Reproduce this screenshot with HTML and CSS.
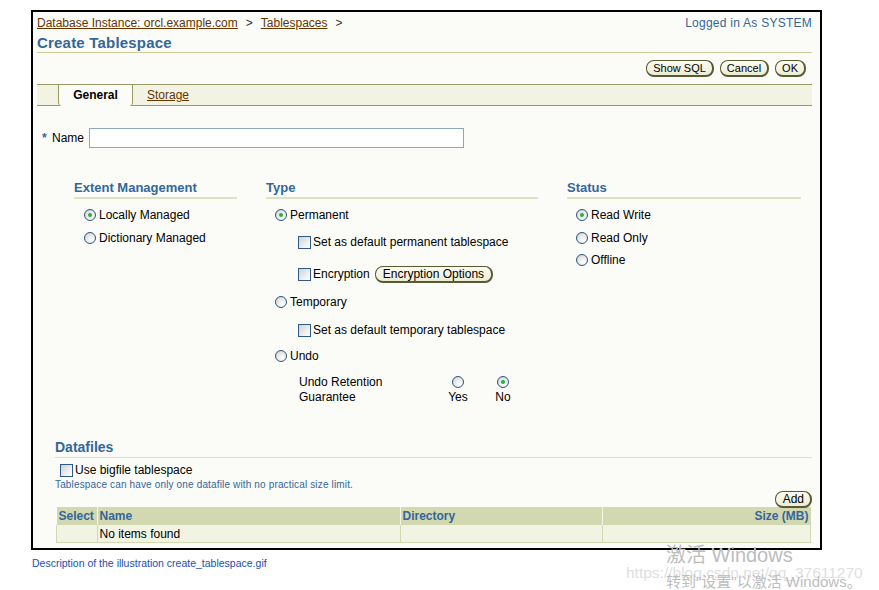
FILE: index.html
```html
<!DOCTYPE html>
<html>
<head>
<meta charset="utf-8">
<link rel="stylesheet" href="styles.css">
</head>
<body>
<div class="frame">
  <div class="topbar">
    <div class="crumbs"><a class="link">Database Instance: orcl.example.com</a><span class="sep">&gt;</span><a class="link">Tablespaces</a><span class="sep">&gt;</span></div>
    <div class="login">Logged in As SYSTEM</div>
  </div>
  <h1 class="title">Create Tablespace</h1>
  <div class="actions">
    <span class="btn">Show SQL</span>
    <span class="btn">Cancel</span>
    <span class="btn">OK</span>
  </div>
  <div class="tabbar">
    <div class="tab active">General</div>
    <div class="tab"><a class="link">Storage</a></div>
  </div>

  <div class="namerow">
    <span class="req">*</span><span class="namelbl">Name</span><span class="input"></span>
  </div>

  <div class="sections">
    <div class="col col-ext">
      <h2 class="sechead">Extent Management</h2>
      <div class="opts">
        <div class="opt"><span class="radio on"></span>Locally Managed</div>
        <div class="opt"><span class="radio"></span>Dictionary Managed</div>
      </div>
    </div>
    <div class="col col-type">
      <h2 class="sechead">Type</h2>
      <div class="opts">
        <div class="opt"><span class="radio on"></span>Permanent</div>
        <div class="opt sub sp1"><span class="check"></span>Set as default permanent tablespace</div>
        <div class="opt sub sp2"><span class="check"></span>Encryption<span class="btn encbtn">Encryption Options</span></div>
        <div class="opt sp3"><span class="radio"></span>Temporary</div>
        <div class="opt sub sp4"><span class="check"></span>Set as default temporary tablespace</div>
        <div class="opt sp5"><span class="radio"></span>Undo</div>
        <div class="undoret">
          <div class="urlabel">Undo Retention<br>Guarantee</div>
          <div class="urchoice yes"><span class="radio"></span><span class="urtext">Yes</span></div>
          <div class="urchoice no"><span class="radio on"></span><span class="urtext">No</span></div>
        </div>
      </div>
    </div>
    <div class="col col-status">
      <h2 class="sechead">Status</h2>
      <div class="opts">
        <div class="opt"><span class="radio on"></span>Read Write</div>
        <div class="opt"><span class="radio"></span>Read Only</div>
        <div class="opt st3"><span class="radio"></span>Offline</div>
      </div>
    </div>
  </div>

  <div class="datafiles">
    <h2 class="sechead dfhead">Datafiles</h2>
    <div class="opt bigfile"><span class="check"></span>Use bigfile tablespace</div>
    <div class="hint">Tablespace can have only one datafile with no practical size limit.</div>
    <div class="addrow"><span class="btn">Add</span></div>
    <table class="grid">
      <thead>
        <tr><th class="c-sel">Select</th><th class="c-name">Name</th><th class="c-dir">Directory</th><th class="c-size">Size (MB)</th></tr>
      </thead>
      <tbody>
        <tr><td></td><td>No items found</td><td></td><td></td></tr>
      </tbody>
    </table>
  </div>
</div>
<div class="caption">Description of the illustration create_tablespace.gif</div>
<div class="watermark">
  <div class="wm1">激活 Windows</div>
  <div class="wm2">https://blog.csdn.net/qq_37611270</div>
  <div class="wm3">转到"设置"以激活 Windows。</div>
</div>
</body>
</html>
```
FILE: styles.css
```css
html, body {
  margin: 0;
  padding: 0;
  background: #ffffff;
  font-family: "Liberation Sans", Arial, sans-serif;
  font-size: 12px;
  color: #000;
}
body {
  position: relative;
  width: 879px;
  height: 590px;
  overflow: hidden;
}
.frame {
  box-sizing: border-box;
  margin: 10px 0 0 31px;
  width: 791px;
  height: 540px;
  border: 2px solid #000;
  background: #fbfcf8;
  padding: 3px 8px 0 4px;
}
.link {
  color: #663300;
  text-decoration: underline;
}
.topbar {
  display: flex;
  justify-content: space-between;
  align-items: baseline;
  height: 16px;
  line-height: 16px;
  font-size: 12px;
}
.sep {
  margin: 0 8px;
  color: #333;
}
.login {
  color: #336699;
  letter-spacing: 0.25px;
}
.title {
  margin: 3px 0 0 0;
  font-size: 15px;
  line-height: 17px;
  font-weight: bold;
  color: #336699;
  letter-spacing: 0.2px;
  padding-bottom: 1px;
  border-bottom: 1px solid #cccc99;
}
.actions {
  display: flex;
  justify-content: flex-end;
  gap: 6px;
  padding: 7px 6px 0 0;
  height: 17px;
}
.btn {
  display: inline-flex;
  align-items: center;
  box-sizing: border-box;
  height: 17px;
  padding: 0 6px;
  border: 1px solid #5a5a32;
  border-right-width: 2px;
  border-bottom-width: 2px;
  border-radius: 8px;
  background: linear-gradient(#fbfbf0, #ecedd6);
  font-size: 11px;
  line-height: 14px;
  color: #000;
  white-space: nowrap;
}
.tabbar {
  margin-top: 7px;
  height: 20px;
  background: #f2f3e3;
  border-top: 1px solid #999966;
  border-bottom: 1px solid #999966;
  display: flex;
  padding-left: 21px;
}
.tab {
  box-sizing: border-box;
  height: 21px;
  line-height: 20px;
  padding: 0 14px;
  font-size: 12px;
}
.tab.active {
  width: 75px;
  text-align: center;
  background: #fbfcf8;
  border-left: 1px solid #999966;
  border-right: 1px solid #999966;
  border-radius: 0 0 4px 4px;
  font-weight: bold;
  margin-bottom: -1px;
}
.namerow {
  display: flex;
  align-items: center;
  margin-top: 22px;
  height: 20px;
}
.req {
  color: #336699;
  font-weight: bold;
  width: 10px;
  padding-left: 5px;
  font-size: 12px;
}
.namelbl {
  width: 37px;
}
.input {
  box-sizing: border-box;
  width: 375px;
  height: 20px;
  border: 1px solid #8fa6bf;
  background: #fff;
}
.sections {
  display: grid;
  grid-template-columns: 163px 272px 234px;
  column-gap: 29px;
  padding-left: 37px;
  margin-top: 32px;
}
.sechead {
  margin: 0;
  font-size: 13px;
  line-height: 16px;
  font-weight: bold;
  color: #336699;
  border-bottom: 2px solid #dde2c4;
  padding-bottom: 1px;
}
.opts {
  padding-top: 8px;
}
.opt {
  display: flex;
  align-items: center;
  height: 16px;
  line-height: 16px;
  margin-bottom: 7px;
  padding-left: 10px;
  white-space: nowrap;
}
.col-type .opt, .col-status .opt {
  padding-left: 9px;
}
.col-type .opt.sub {
  padding-left: 32px;
}
.opt.sp1 { margin-top: 11px; }
.opt.sp2 { margin-top: 15px; margin-bottom: 0; height: 18px; }
.opt.sp3 { margin-top: 11px; }
.opt.sp4 { margin-top: 12px; }
.opt.sp5 { margin-top: 10px; }
.opt.st3 { margin-top: -1px; }
.radio {
  box-sizing: border-box;
  position: relative;
  display: inline-block;
  width: 12px;
  height: 12px;
  border: 1px solid #2f5578;
  border-radius: 50%;
  background: radial-gradient(circle at 65% 70%, #ffffff 0%, #e4e4e4 60%, #c4c4c4 100%);
  margin-right: 3px;
  flex: none;
}
.radio.on::after {
  content: "";
  position: absolute;
  left: 3px;
  top: 3px;
  width: 4px;
  height: 4px;
  border-radius: 50%;
  background: #22b43a;
}
.check {
  box-sizing: border-box;
  display: inline-block;
  width: 13px;
  height: 13px;
  border: 1px solid #2d5a87;
  background: linear-gradient(135deg, #cfcfcf, #f4f4f4 70%, #ffffff);
  margin-right: 2px;
  flex: none;
}
.encbtn {
  margin-left: 5px;
  padding: 0 7px;
  font-size: 12px;
}
.undoret {
  display: flex;
  align-items: flex-start;
  padding-left: 33px;
  margin-top: 11px;
  line-height: 15px;
  font-size: 12px;
}
.urlabel {
  width: 147px;
}
.urchoice {
  display: flex;
  flex-direction: column;
  align-items: center;
  width: 24px;
  padding-top: 1px;
}
.urchoice .radio {
  margin: 0;
}
.urchoice.no {
  margin-left: 21px;
}
.urtext {
  margin-top: 2px;
}
.datafiles {
  margin: 34px 0 0 18px;
}
.dfhead {
  font-size: 14px;
  line-height: 17px;
  border-bottom-width: 1px;
}
.bigfile {
  padding-left: 5px;
  margin: 4px 0 0 0;
}
.hint {
  color: #336699;
  font-size: 10px;
  line-height: 13px;
  letter-spacing: 0.15px;
}
.addrow {
  display: flex;
  justify-content: flex-end;
  margin-top: 0;
  margin-bottom: -1px;
}
.addrow .btn {
  font-size: 12px;
  padding: 0 6px 0 7px;
}
.grid {
  width: 755px;
  border-collapse: collapse;
  margin-left: 1px;
  margin-top: 0;
}
.grid th {
  background: #d2d8b0;
  color: #336699;
  font-size: 12px;
  font-weight: bold;
  text-align: left;
  height: 18px;
  padding: 0 2px;
  border-left: 1px solid #f4f4e8;
}
.grid th:first-child { border-left: none; }
.grid td {
  background: #f2f4e3;
  height: 17px;
  padding: 0 2px;
  border: 1px solid #d2d8b0;
  border-top: none;
}
.c-sel { width: 36px; }
.c-name { width: 298px; }
.c-dir { width: 197px; }
.grid th.c-size { text-align: right; }
.caption {
  margin: 7px 0 0 32px;
  font-size: 10.5px;
  color: #1a4faa;
}
.watermark {
  position: absolute;
  left: 626px;
  top: 544px;
  font-family: "Liberation Sans", "Noto Sans CJK SC", sans-serif;
}
.wm1 {
  margin-left: 40px;
  font-size: 20px;
  line-height: 22px;
  color: #bdbdbd;
}
.wm2 {
  font-size: 15.5px;
  line-height: 14px;
  color: #e0e0e0;
}
.wm3 {
  margin-left: 40px;
  margin-top: -7px;
  font-size: 15px;
  line-height: 18px;
  color: #bdbdbd;
}
```
